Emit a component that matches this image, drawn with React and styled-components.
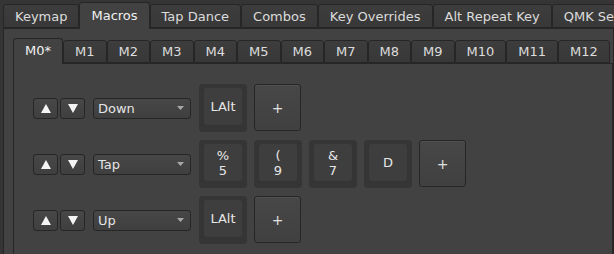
import React from 'react';
import styled, { createGlobalStyle } from 'styled-components';

const GlobalStyle = createGlobalStyle`
  html, body {
    margin: 0;
    padding: 0;
    background: #353535;
    overflow: hidden;
  }
  body {
    font-family: "DejaVu Sans", "Noto Sans", sans-serif;
    font-size: 13px;
    color: #e0e0e0;
  }
`;

const Window = styled.div`
  width: 614px;
  height: 254px;
  padding-left: 3px;
  box-sizing: border-box;
  overflow: hidden;
`;

const TabBar = styled.div`
  display: flex;
  align-items: flex-end;
  height: ${p => p.$height}px;
  white-space: nowrap;
`;

const Tab = styled.div`
  position: relative;
  display: flex;
  align-items: center;
  flex-shrink: 0;
  box-sizing: border-box;
  height: ${p => (p.$active ? p.$height + 3 : p.$height)}px;
  margin-bottom: ${p => (p.$active ? -1 : 0)}px;
  padding: 0 11px ${p => (p.$active ? 2 : 0)}px 11px;
  border: 1px solid #262626;
  border-bottom: ${p => (p.$active ? 'none' : '1px solid #262626')};
  border-radius: 3px 3px 0 0;
  background: ${p => (p.$active ? '#424242' : 'linear-gradient(#3d3d3d, #383838)')};
  color: ${p => (p.$active ? '#f0f0f0' : '#dcdcdc')};
  z-index: ${p => (p.$active ? 1 : 0)};
`;

const Pane = styled.div`
  box-sizing: border-box;
  height: ${p => p.$height}px;
  border: 1px solid #262626;
  background: #424242;
  padding: ${p => p.$pad};
`;

const MacroList = styled.div`
  display: flex;
  flex-direction: column;
  gap: 8px;
`;

const MacroRow = styled.div`
  display: flex;
  align-items: center;
  height: 48px;
`;

const Arrows = styled.div`
  display: flex;
  gap: 2px;
  margin-right: 8px;
`;

const ArrowButton = styled.div`
  box-sizing: border-box;
  width: 25px;
  height: 21px;
  display: flex;
  align-items: center;
  justify-content: center;
  border: 1px solid #262626;
  border-radius: 3px;
  background: linear-gradient(#474747, #3f3f3f);
`;

const Combo = styled.div`
  box-sizing: border-box;
  width: 98px;
  height: 21px;
  display: flex;
  align-items: center;
  justify-content: space-between;
  padding: 0 6px 0 4px;
  margin-right: 8px;
  border: 1px solid #262626;
  border-radius: 3px;
  background: linear-gradient(#474747, #3f3f3f);
  color: #e4e4e4;
`;

const Keys = styled.div`
  display: flex;
  gap: 7px;
`;

const KeyCap = styled.div`
  box-sizing: border-box;
  width: 48px;
  height: 48px;
  padding: 4px 5px 7px 5px;
  border-radius: 4px;
  background: #353535;
  display: flex;
`;

const KeyFace = styled.div`
  flex: 1;
  border-radius: 3px;
  background: #3e3e3e;
  display: flex;
  flex-direction: column;
  align-items: center;
  justify-content: center;
  line-height: 15px;
  color: #e6e6e6;
`;

const AddButton = styled.div`
  box-sizing: border-box;
  width: 47px;
  height: 47px;
  display: flex;
  align-items: center;
  justify-content: center;
  border: 1px solid #262626;
  border-radius: 3px;
  background: linear-gradient(#474747, #404040);
  box-shadow: inset 0 1px 0 #505050;
  color: #e0e0e0;
  font-size: 14px;
`;

const Triangle = ({ down, color = '#f4f4f4', w = 10, h = 9 }) => (
  <svg width={w} height={h} viewBox={`0 0 ${w} ${h}`}>
    <polygon
      points={down ? `0,0 ${w},0 ${w / 2},${h}` : `${w / 2},0 ${w},${h} 0,${h}`}
      fill={color}
    />
  </svg>
);

const topTabs = ['Keymap', 'Macros', 'Tap Dance', 'Combos', 'Key Overrides', 'Alt Repeat Key', 'QMK Settings'];
const macroTabs = ['M0*', 'M1', 'M2', 'M3', 'M4', 'M5', 'M6', 'M7', 'M8', 'M9', 'M10', 'M11', 'M12'];

const rows = [
  { action: 'Down', keys: [['LAlt']] },
  { action: 'Tap', keys: [['%', '5'], ['(', '9'], ['&', '7'], ['D']] },
  { action: 'Up', keys: [['LAlt']] },
];

function Row({ action, keys }) {
  return (
    <MacroRow>
      <Arrows>
        <ArrowButton><Triangle /></ArrowButton>
        <ArrowButton><Triangle down /></ArrowButton>
      </Arrows>
      <Combo>
        <span>{action}</span>
        <Triangle down color="#a8a8a8" w={7} h={4} />
      </Combo>
      <Keys>
        {keys.map((lines, i) => (
          <KeyCap key={i}>
            <KeyFace>
              {lines.map((l, j) => <span key={j}>{l}</span>)}
            </KeyFace>
          </KeyCap>
        ))}
        <AddButton>+</AddButton>
      </Keys>
    </MacroRow>
  );
}

export default function App() {
  return (
    <>
      <GlobalStyle />
      <Window>
        <TabBar $height={28}>
          {topTabs.map(t => (
            <Tab key={t} $height={24} $active={t === 'Macros'}>{t}</Tab>
          ))}
        </TabBar>
        <Pane $height={300} $pad="9px 0 0 9px">
          <TabBar $height={25}>
            {macroTabs.map(t => (
              <Tab key={t} $height={23} $active={t === 'M0*'}>{t}</Tab>
            ))}
          </TabBar>
          <Pane $height={300} $pad="20px 0 0 19px">
            <MacroList>
              {rows.map((r, i) => <Row key={i} {...r} />)}
            </MacroList>
          </Pane>
        </Pane>
      </Window>
    </>
  );
}
